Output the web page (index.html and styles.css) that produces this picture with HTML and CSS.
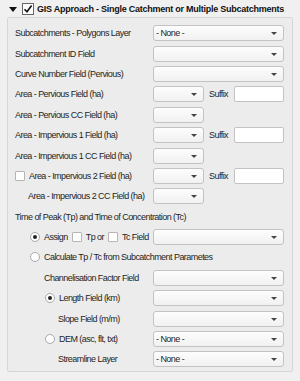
FILE: index.html
```html
<!DOCTYPE html>
<html lang="en">
<head>
    <meta charset="UTF-8">
    <meta name="viewport" content="width=device-width, initial-scale=1.0">
    <title>GIS Approach</title>
    <link rel="stylesheet" href="styles.css">
</head>
<body>
    <div class="header">
        <span class="collapse-arrow"></span>
        <span class="checkbox checked">
            <svg width="10" height="10" viewBox="0 0 10 10"><path d="M1.5 5.2 L4 7.8 L8.6 1.6" fill="none" stroke="#111" stroke-width="1.6"/></svg>
        </span>
        <span class="title">GIS Approach - Single Catchment or Multiple Subcatchments</span>
    </div>

    <div class="group">
        <div class="row">
            <span class="label">Subcatchments - Polygons Layer</span>
            <div class="combo">- None -</div>
        </div>
        <div class="row">
            <span class="label">Subcatchment ID Field</span>
            <div class="combo"></div>
        </div>
        <div class="row">
            <span class="label">Curve Number Field (Pervious)</span>
            <div class="combo"></div>
        </div>
        <div class="row">
            <span class="label">Area - Pervious Field (ha)</span>
            <div class="combo small"></div>
            <span class="suffix">Suffix</span>
            <div class="text-input"></div>
        </div>
        <div class="row">
            <span class="label">Area - Pervious CC Field (ha)</span>
            <div class="combo small"></div>
        </div>
        <div class="row">
            <span class="label">Area - Impervious 1 Field (ha)</span>
            <div class="combo small"></div>
            <span class="suffix">Suffix</span>
            <div class="text-input"></div>
        </div>
        <div class="row">
            <span class="label">Area - Impervious 1 CC Field (ha)</span>
            <div class="combo small"></div>
        </div>
        <div class="row">
            <span class="label with-box"><span class="checkbox small"></span>Area - Impervious 2 Field (ha)</span>
            <div class="combo small"></div>
            <span class="suffix">Suffix</span>
            <div class="text-input"></div>
        </div>
        <div class="row">
            <span class="label indent-1">Area - Impervious 2 CC Field (ha)</span>
            <div class="combo small"></div>
        </div>

        <div class="row">
            <span class="label wide">Time of Peak (Tp) and Time of Concentration (Tc)</span>
        </div>
        <div class="row">
            <span class="label option">
                <span class="radio on"></span>Assign
                <span class="checkbox small inline"></span>Tp or
                <span class="checkbox small inline"></span>Tc Field
            </span>
            <div class="combo"></div>
        </div>
        <div class="row">
            <span class="label option wide"><span class="radio"></span>Calculate Tp / Tc from Subcatchment Parametes</span>
        </div>
        <div class="row">
            <span class="label indent-2">Channelisation Factor Field</span>
            <div class="combo"></div>
        </div>
        <div class="row">
            <span class="label option sub"><span class="radio on"></span>Length Field (km)</span>
            <div class="combo"></div>
        </div>
        <div class="row">
            <span class="label indent-3">Slope Field (m/m)</span>
            <div class="combo"></div>
        </div>
        <div class="row">
            <span class="label option sub"><span class="radio"></span>DEM (asc, flt, txt)</span>
            <div class="combo">- None -</div>
        </div>
        <div class="row">
            <span class="label indent-3">Streamline Layer</span>
            <div class="combo">- None -</div>
        </div>
    </div>
</body>
</html>
```

FILE: styles.css
```css
body {
    margin: 0;
    width: 300px;
    height: 381px;
    background: #f0f0f0;
    font-family: 'Liberation Sans', Arial, sans-serif;
    font-size: 9px;
    letter-spacing: -0.55px;
    color: #1e1e1e;
    overflow: hidden;
}

.header {
    display: flex;
    align-items: center;
    height: 18px;
    padding-left: 9px;
}

.collapse-arrow {
    width: 0;
    height: 0;
    border-left: 4px solid transparent;
    border-right: 4px solid transparent;
    border-top: 5px solid #111;
    margin-right: 5px;
}

.checkbox {
    display: inline-flex;
    align-items: center;
    justify-content: center;
    width: 12px;
    height: 12px;
    background: #fff;
    border: 1px solid #9a9a9a;
    box-sizing: border-box;
    flex-shrink: 0;
}

.checkbox.checked {
    border-color: #666;
    margin-right: 3px;
}

.checkbox.small {
    width: 10px;
    height: 10px;
    border-color: #b5b5b5;
    border-radius: 1px;
    margin-right: 4px;
}

.checkbox.inline {
    margin-left: 4px;
}

.title {
    font-weight: bold;
    color: #111;
    letter-spacing: -0.25px;
    white-space: nowrap;
}

.group {
    margin: -1px 0 0 7px;
    width: 286px;
    height: 355px;
    box-sizing: border-box;
    border: 1px solid #d6d6d6;
    border-radius: 2px;
    background: #ececec;
    padding: 5px 8px 0 7px;
}

.row {
    display: flex;
    align-items: center;
    height: 20.4px;
}

.label {
    width: 138px;
    flex-shrink: 0;
    white-space: nowrap;
    display: flex;
    align-items: center;
}

.label.wide {
    width: auto;
}

.label.with-box .checkbox {
    margin-right: 4px;
}

.indent-1 { padding-left: 13px; box-sizing: border-box; }
.indent-2 { padding-left: 29px; box-sizing: border-box; }
.indent-3 { padding-left: 43px; box-sizing: border-box; }

.option {
    padding-left: 15px;
    box-sizing: border-box;
}

.option.sub {
    padding-left: 30px;
}

.radio {
    width: 10px;
    height: 10px;
    box-sizing: border-box;
    border: 1px solid #a9a9a9;
    border-radius: 50%;
    background: #fff;
    margin-right: 4px;
    flex-shrink: 0;
    position: relative;
}

.radio.on::after {
    content: '';
    position: absolute;
    left: 2px;
    top: 2px;
    width: 4px;
    height: 4px;
    border-radius: 50%;
    background: #222;
}

.combo {
    position: relative;
    width: 131px;
    height: 16px;
    box-sizing: border-box;
    border: 1px solid #c3c3c3;
    border-radius: 3px;
    background: linear-gradient(to bottom, #fdfdfd, #f1f1f1);
    padding: 0 14px 0 2px;
    line-height: 14px;
    white-space: nowrap;
}

.combo::after {
    content: '';
    position: absolute;
    right: 6px;
    top: 6px;
    border-left: 3px solid transparent;
    border-right: 3px solid transparent;
    border-top: 3px solid #444;
}

.combo.small {
    width: 51px;
}

.suffix {
    margin-left: 5px;
}

.text-input {
    margin-left: auto;
    width: 50px;
    height: 16px;
    box-sizing: border-box;
    border: 1px solid #c3c3c3;
    border-radius: 2px;
    background: #fff;
}
```
